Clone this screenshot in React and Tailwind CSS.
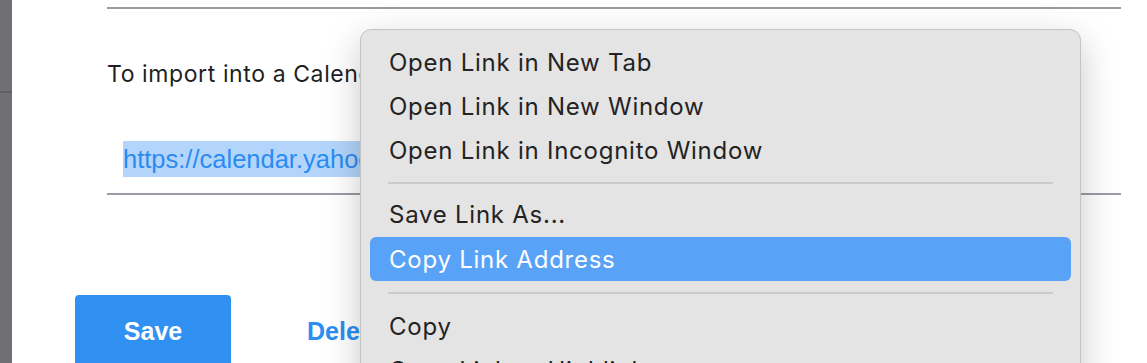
import React from 'react';

const menuItems = [
  { label: 'Open Link in New Tab' },
  { label: 'Open Link in New Window' },
  { label: 'Open Link in Incognito Window' },
  { sep: 'first' },
  { label: 'Save Link As...' },
  { label: 'Copy Link Address', active: true },
  { sep: 'second' },
  { label: 'Copy' },
  { label: 'Copy Link to Highlight' },
];

function ContextMenu() {
  return (
    <div className="absolute left-[360px] top-[29px] w-[721px] h-[420px] rounded-[11px] border border-[#c4c4c4] bg-[#e4e4e4] shadow-[0_12px_36px_rgba(0,0,0,0.22)] pt-[11px] font-['Inter',sans-serif] text-[24px] text-[#232323]">
      {menuItems.map((item, i) => {
        if (item.sep) {
          return (
            <div
              key={i}
              className={
                item.sep === 'first'
                  ? 'mx-[27px] mt-[9px] mb-[9px] h-[2px] bg-[#cbcbcb]'
                  : 'mx-[27px] mt-[11px] mb-[11px] h-[2px] bg-[#cbcbcb]'
              }
            />
          );
        }
        return (
          <div key={i} className="px-[9px]">
            <div
              className={
                item.active
                  ? 'h-[44px] pl-[19px] pt-[2px] flex items-center rounded-[6px] bg-[#58a2f7] text-white'
                  : 'h-[44px] pl-[19px] flex items-center'
              }
            >
              <span className="tracking-[0.75px]">{item.label}</span>
            </div>
          </div>
        );
      })}
    </div>
  );
}

export default function App() {
  return (
    <div className="relative w-full h-[363px] overflow-hidden bg-white flex font-['Liberation_Sans',Arial,sans-serif]">
      <div className="w-[12px] shrink-0 bg-[#6f7074] flex flex-col">
        <div className="h-[91px]" />
        <div className="h-[2px] bg-[#5e5f63]" />
      </div>

      <div className="flex-1 pl-[63px]">
        <div className="ml-[32px] w-[1014px]">
          <div className="mt-[7px] h-[2px] bg-[#9b9ca3]" />
          <p className="mt-[51px] font-['Inter',sans-serif] text-[23px] tracking-[0.6px] leading-[28px] text-[#1e1f22]">
            To import into a Calendar application, copy the link below.
          </p>
          <div className="mt-[53px] pl-[16px]">
            <span className="inline-block h-[36px] leading-[36px] text-[25.5px] text-[#2a8bf1] bg-[#b4d5fb]">
              https://calendar.yahoo.com/export/ics/primary.ics
            </span>
          </div>
          <div className="mt-[16px] h-[2px] bg-[#9b9ca3]" />
        </div>

        <div className="mt-[100px] flex items-start">
          <button className="w-[156px] h-[80px] rounded-[4px] bg-[#3091f2] text-white text-[25px] font-bold leading-[28px] pt-[22px] flex justify-center items-start">
            Save
          </button>
          <span className="ml-[76px] pt-[22px] text-[25px] font-bold leading-[28px] text-[#2c8ef2]">
            Delete
          </span>
        </div>
      </div>

      <ContextMenu />
    </div>
  );
}
